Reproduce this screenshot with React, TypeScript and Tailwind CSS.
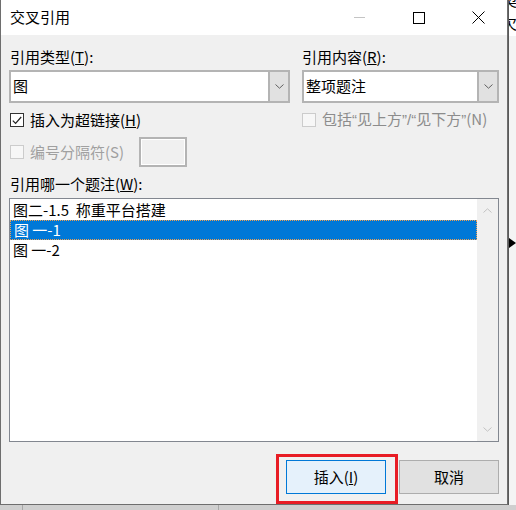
import React from 'react';

const font = { fontFamily: '"Noto Sans CJK SC", "Noto Sans", sans-serif' };
const latin = { fontFamily: '"Liberation Sans", sans-serif' };

const Chevron: React.FC<{ up?: boolean; color?: string }> = ({ up, color = '#606060' }) => (
  <svg width="9" height="5" viewBox="0 0 9 5" className="block">
    <path d={up ? 'M0.5 4.5 L4.5 0.8 L8.5 4.5' : 'M0.5 0.5 L4.5 4.2 L8.5 0.5'} fill="none" stroke={color} strokeWidth="1" />
  </svg>
);

const Combo: React.FC<{ value: string }> = ({ value }) => (
  <div className="flex h-[33px] w-full border-2 border-[#b4b4b4] bg-white">
    <div className="flex flex-1 items-center pl-[2px] text-[15px] text-black">{value}</div>
    <div className="flex w-[20px] items-center justify-center border-l-2 border-[#b4b4b4] bg-[#e1e1e1]">
      <Chevron />
    </div>
  </div>
);

const CheckBox: React.FC<{ checked?: boolean; disabled?: boolean }> = ({ checked, disabled }) => (
  <div
    className={`flex h-[14px] w-[14px] shrink-0 items-center justify-center border ${
      disabled ? 'border-[#cccccc] bg-[#f7f7f7]' : 'border-[#333333] bg-white'
    }`}
  >
    {checked && (
      <svg width="10" height="9" viewBox="0 0 10 9">
        <path d="M0.8 4.6 L3.6 7.4 L9.2 1" fill="none" stroke="#222" strokeWidth="1.2" />
      </svg>
    )}
  </div>
);

const captions = ['图二-1.5  称重平台搭建', '图 一-1', '图 一-2'];

export default function App() {
  return (
    <div className="flex h-[510px] w-[516px] flex-col overflow-hidden bg-[#cfcfcf]" style={font}>
      <div className="flex h-[505px]">
        {/* Dialog */}
        <div className="flex h-[505px] w-[508px] flex-col border border-t-0 border-[#6e6e6e] bg-[#f0f0f0]">
          {/* Title bar */}
          <div className="flex h-[35px] shrink-0 items-center bg-white">
            <span className="pl-[9px] text-[15px] text-black">交叉引用</span>
            <div className="ml-auto flex h-full">
              <div className="flex w-[60px] items-center justify-center">
                <div className="h-px w-[11px] bg-[#c4c4c4]" />
              </div>
              <div className="flex w-[60px] items-center justify-center">
                <div className="h-[12px] w-[12px] border border-black" />
              </div>
              <div className="flex w-[58px] items-center justify-center">
                <svg width="13" height="13" viewBox="0 0 13 13">
                  <path d="M0.5 0.5 L12.5 12.5 M12.5 0.5 L0.5 12.5" stroke="#000" strokeWidth="1" />
                </svg>
              </div>
            </div>
          </div>

          {/* Body */}
          <div className="flex flex-1 flex-col pl-[8px] pr-[7px] pt-[12px] text-[15px] text-black">
            <div className="flex gap-[12px]">
              <div className="flex w-[281px] flex-col">
                <div className="pl-[1px] leading-[20px]">
                  引用类型(<span className="underline">T</span>):
                </div>
                <div className="mt-[3px]">
                  <Combo value="图" />
                </div>
              </div>
              <div className="flex w-[197px] flex-col">
                <div className="leading-[20px]">
                  引用内容(<span className="underline">R</span>):
                </div>
                <div className="mt-[3px]">
                  <Combo value="整项题注" />
                </div>
              </div>
            </div>

            <div className="mt-[7px] flex h-[20px] gap-[12px]">
              <div className="flex w-[281px] items-center gap-[6px] pl-[1px]">
                <CheckBox checked />
                <span>
                  插入为超链接(<span className="underline">H</span>)
                </span>
              </div>
              <div className="flex w-[197px] items-center gap-[6px]">
                <CheckBox disabled />
                <span className="whitespace-nowrap text-[#8c8c8c]">
                  包括<span style={latin}>“</span>见上方<span style={latin}>”/“</span>见下方<span style={latin}>”</span>(N)
                </span>
              </div>
            </div>

            <div className="mt-[7px] flex h-[30px] items-center pl-[1px]">
              <CheckBox disabled />
              <span className="ml-[6px] text-[#a0a0a0]">编号分隔符(S)</span>
              <div className="ml-[15px] h-[30px] w-[48px] border-2 border-[#b4b4b4] bg-[#f0f0f0] shadow-[inset_0_0_0_1px_#ffffff]" />
            </div>

            <div className="mt-[7px] pl-[1px] leading-[20px]">
              引用哪一个题注(<span className="underline">W</span>):
            </div>

            {/* List box */}
            <div className="mt-[4px] flex h-[244px] w-[490px] border border-[#828790] bg-white">
              <div className="flex flex-1 flex-col pt-px">
                {captions.map((c, i) => (
                  <div
                    key={c}
                    className={`flex h-[20px] items-center whitespace-pre pl-[3px] ${
                      i === 1
                        ? 'border border-dotted border-[#f0a050] bg-[#0078d7] pl-[2px] text-white'
                        : 'text-black'
                    }`}
                  >
                    {c}
                  </div>
                ))}
              </div>
              <div className="flex w-[21px] flex-col items-center justify-between bg-[#f0f0f0] py-[9px]">
                <Chevron up color="#c2c2c2" />
                <Chevron color="#c2c2c2" />
              </div>
            </div>

            {/* Buttons */}
            <div className="mt-[18px] flex justify-end gap-[13px] pr-px">
              <div className="relative">
                <div className="flex h-[34px] w-[100px] items-center justify-center border border-[#0078d7] bg-[#e5f1fb]">
                  插入(<span className="underline">I</span>)
                </div>
                <div className="pointer-events-none absolute -bottom-[10px] -left-[10px] -right-[12px] -top-[6px] border-[3px] border-[#e81c24]" />
              </div>
              <div className="flex h-[34px] w-[100px] items-center justify-center border border-[#adadad] bg-[#e1e1e1]">
                取消
              </div>
            </div>
          </div>
        </div>

        {/* Background window edge on the right */}
        <div className="relative flex w-[8px] flex-col border-l border-[#5a5a5a] bg-[#f4f4f4]">
          <div className="h-[36px] overflow-hidden bg-white text-[15px] leading-[20px] text-black">
            <div className="-ml-[7px] -mt-[10px]">契</div>
            <div className="-ml-[7px] mt-[3px]">欠</div>
          </div>
          <div className="absolute left-0 top-[238px] h-0 w-0 border-y-[5px] border-l-[7px] border-y-transparent border-l-black" />
        </div>
      </div>
      <div className="flex h-[5px]">
        <div className="ml-[22px] h-full w-px bg-[#a8a8a8]" />
        <div className="ml-[195px] h-full w-px bg-[#a8a8a8]" />
      </div>
    </div>
  );
}
